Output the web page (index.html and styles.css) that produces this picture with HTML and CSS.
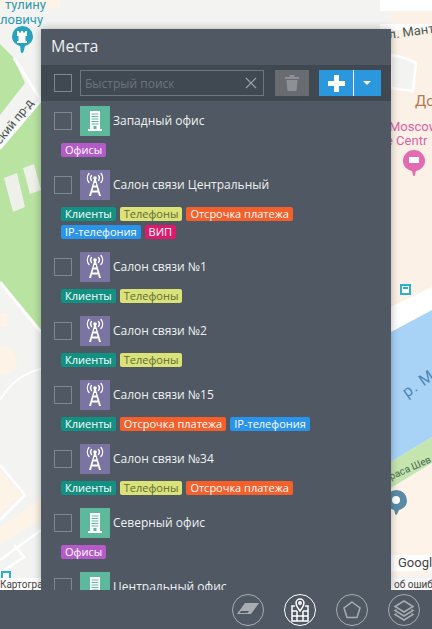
FILE: index.html
```html
<!DOCTYPE html>
<html lang="ru">
<head>
    <meta charset="UTF-8">
    <meta name="viewport" content="width=device-width, initial-scale=1.0">
    <title>Места</title>
    <link rel="stylesheet" href="styles.css">
</head>
<body>
    <svg width="0" height="0" class="defs">
        <symbol id="office" viewBox="0 0 30 30">
            <path fill="#fff" d="M10 5h10v18h-10z"/>
            <path fill="#fff" d="M8 23h14v2h-14z"/>
            <path fill="#5eb89b" d="M11.500 7.500h7v1h-7zM11.500 10h7v1h-7zM11.500 12.500h7v1h-7zM11.500 15h7v1h-7zM11.500 17.500h7v1h-7zM13.500 20h3v3h-3z"/>
        </symbol>
        <symbol id="tower" viewBox="0 0 30 30">
            <g fill="none" stroke="#fff" stroke-width="1.300" stroke-linecap="round">
                <path d="M11.500 5.500a4 4 0 0 0 0 5M9 3.500a7 7 0 0 0 0 9"/>
                <path d="M18.500 5.500a4 4 0 0 1 0 5M21 3.500a7 7 0 0 1 0 9"/>
            </g>
            <circle cx="15" cy="8" r="1.800" fill="#fff"/>
            <path fill="#fff" d="M14.200 9h1.600l5.200 17h-2l-1-3.500h-6l-1 3.500h-2zM13.300 17.500l-.8 3h5l-.8-3zM14.300 13l-.6 2.500h2.600l-.6-2.500z"/>
        </symbol>
    </svg>

    <svg class="map" width="432" height="629" viewBox="0 0 432 629">
        <rect width="432" height="629" fill="#f3f3f2"/>
        <!-- левая часть -->
        <path fill="#fdf3e6" d="M0 0h60v8h-60z"/>
        <path fill="#b9e3a1" d="M0 44l13 13 12 26-25 32z"/>
        <path fill="#b9e3a1" d="M0 150l41 -48v230l-41 -50z"/>
        <path fill="none" stroke="#fff" stroke-width="3" d="M0 148l41 -48M14 58l28 44M0 282l41 50"/>
        <path fill="#eef0ea" d="M4 178l13 -5 8 34-12 5zM23 168l11 -4 7 26-11 4z"/>
        <path fill="#fdf3e6" d="M0 313h7v14h-7zM0 346q16 2 17 15t-17 15z"/>
        <path fill="none" stroke="#fff" stroke-width="2" d="M0 400q15 -25 41 -31"/>
        <path fill="#fdf3e6" d="M0 470l22 25-22 20zM0 545l41 -26v-20l-41 28z"/>
        <path fill="none" stroke="#fff" stroke-width="2.500" d="M0 465l25 30-25 25M0 560l41 -30M14 545l10 12-24 16"/>
        <path fill="#fff" d="M0 578h41v12h-41z"/>
        <!-- правая часть -->
        <path fill="#fbf1e6" d="M391 12h41v280l-41 18z"/>
        <path fill="#fff" d="M380 0h52v11h-52zM380 24h52v6h-52z"/>
        <path fill="#f3f3f2" stroke="#fff" stroke-width="2.500" d="M391 55q14 2 25 8l-3 28-22 -3z"/>
        <path fill="#fff" d="M391 307l41 -20v24l-41 21z"/>
        <path fill="#a8d3f6" d="M391 332l41 -22v127l-41 25z"/>
        <path fill="#c4e5ae" d="M391 488l41 -25v-26l-41 25z"/>
        <path fill="#fdf3e9" d="M391 488l41 -25v112h-41z"/>
        <rect x="391" y="555" width="41" height="16" fill="#fff"/>
        <rect x="391" y="578" width="41" height="12" fill="#f7f7f7"/>
        <!-- значки -->
        <path fill="#27a3bd" d="M22 53c-2 0-1-4 -2-7 -4-1-8-4.500-8-9.500a10.500 10.500 0 0 1 21 0c0 5-4 8.500-8 9.500-1 3-1 7-3 7z"/>
        <path fill="#fff" d="M17 31h2v1.500h2v-1.500h2v1.500h2v-1.500h2v5h-1.500v5h1.500v2h-10v-2h1.500v-5h-1.500z"/>
        <path fill="#e36bb0" d="M414 176c-1.500 0-1-3-2-5-4.500-1-9-4.500-9-10a11 11 0 0 1 22 0c0 5.500-4.500 9-9 10-1 2-.5 5-2 5z"/>
        <rect x="409" y="157" width="10" height="6" fill="#fff"/>
        <rect x="400" y="284" width="11" height="11" fill="#2db0d0"/>
        <path fill="#fff" d="M402 286h7v7h-7z"/>
        <path fill="#2db0d0" d="M403 287h5v2h-5z"/>
        <path fill="#5a8ba6" d="M396 515c-1 0-1-3-2-5-4-1-8-4-8-9.500a10 10 0 0 1 21 0c0 5.500-4 8.500-8 9.500-1 2-2 5-3 5z"/>
        <circle cx="396" cy="500" r="4" fill="#fff"/>
        <rect x="1" y="571" width="10" height="7" fill="#2db0d0"/>
        <rect x="3" y="573" width="6" height="5" fill="#fff"/>
        <!-- подписи -->
        <g font-family="'Roboto', sans-serif">
            <text x="5" y="9" class="map-teal">тулину</text>
            <text x="0" y="24" class="map-teal">ловичу</text>
            <text x="0" y="0" class="map-small" transform="translate(0 145) rotate(-51)">ский пр-д</text>
            <text x="0" y="0" class="map-street" transform="translate(389 39) rotate(-8)">л. Мант</text>
            <text x="415" y="106" class="map-brown">До</text>
            <text x="389" y="131" class="map-pink">Moscow</text>
            <text x="386" y="145" class="map-pink">e Centr</text>
            <text x="0" y="0" class="map-water" transform="translate(407 398) rotate(-35)">р. М</text>
            <text x="0" y="0" class="map-road" transform="translate(391 480) rotate(-24)">раса Шев</text>
            <text x="398" y="567" class="map-attr">Google</text>
            <text x="394" y="588" class="map-tiny">об ошиб</text>
            <text x="0" y="588" class="map-tiny">Картогра</text>
        </g>
    </svg>

    <div class="panel">
        <h2 class="panel-title">Места</h2>
        <div class="toolbar">
            <span class="checkbox"></span>
            <div class="search">
                <span class="search-hint">Быстрый поиск</span>
                <svg class="search-clear" width="12" height="12" viewBox="0 0 12 12">
                    <path d="M1 1l10 10M11 1l-10 10" stroke="#9aa0a6" stroke-width="1.200" fill="none"/>
                </svg>
            </div>
            <button class="trash-btn">
                <svg width="16" height="18" viewBox="0 0 16 18">
                    <path fill="#8e9094" d="M1 3h14v2h-14zM5.500 1h5v2h-5zM2.500 6h11l-1 11h-9z"/>
                </svg>
            </button>
            <button class="add-btn">
                <span class="add-plus">
                    <svg width="17" height="17" viewBox="0 0 17 17">
                        <path fill="#fff" d="M6 0h5v6h6v5h-6v6h-5v-6h-6v-5h6z"/>
                    </svg>
                </span>
                <span class="add-caret"></span>
            </button>
        </div>

        <ul class="place-list">
            <li class="place">
                <div class="place-head">
                    <span class="checkbox"></span>
                    <svg class="place-icon office"><use href="#office"/></svg>
                    <span class="place-name">Западный офис</span>
                </div>
                <div class="tags">
                    <span class="tag tag-office">Офисы</span>
                </div>
            </li>
            <li class="place">
                <div class="place-head">
                    <span class="checkbox"></span>
                    <svg class="place-icon tower"><use href="#tower"/></svg>
                    <span class="place-name">Салон связи Центральный</span>
                </div>
                <div class="tags">
                    <span class="tag tag-clients">Клиенты</span>
                    <span class="tag tag-phones">Телефоны</span>
                    <span class="tag tag-delay">Отсрочка платежа</span>
                    <span class="tag tag-ip">IP-телефония</span>
                    <span class="tag tag-vip">ВИП</span>
                </div>
            </li>
            <li class="place">
                <div class="place-head">
                    <span class="checkbox"></span>
                    <svg class="place-icon tower"><use href="#tower"/></svg>
                    <span class="place-name">Салон связи №1</span>
                </div>
                <div class="tags">
                    <span class="tag tag-clients">Клиенты</span>
                    <span class="tag tag-phones">Телефоны</span>
                </div>
            </li>
            <li class="place">
                <div class="place-head">
                    <span class="checkbox"></span>
                    <svg class="place-icon tower"><use href="#tower"/></svg>
                    <span class="place-name">Салон связи №2</span>
                </div>
                <div class="tags">
                    <span class="tag tag-clients">Клиенты</span>
                    <span class="tag tag-phones">Телефоны</span>
                </div>
            </li>
            <li class="place">
                <div class="place-head">
                    <span class="checkbox"></span>
                    <svg class="place-icon tower"><use href="#tower"/></svg>
                    <span class="place-name">Салон связи №15</span>
                </div>
                <div class="tags">
                    <span class="tag tag-clients">Клиенты</span>
                    <span class="tag tag-delay">Отсрочка платежа</span>
                    <span class="tag tag-ip">IP-телефония</span>
                </div>
            </li>
            <li class="place">
                <div class="place-head">
                    <span class="checkbox"></span>
                    <svg class="place-icon tower"><use href="#tower"/></svg>
                    <span class="place-name">Салон связи №34</span>
                </div>
                <div class="tags">
                    <span class="tag tag-clients">Клиенты</span>
                    <span class="tag tag-phones">Телефоны</span>
                    <span class="tag tag-delay">Отсрочка платежа</span>
                </div>
            </li>
            <li class="place">
                <div class="place-head">
                    <span class="checkbox"></span>
                    <svg class="place-icon office"><use href="#office"/></svg>
                    <span class="place-name">Северный офис</span>
                </div>
                <div class="tags">
                    <span class="tag tag-office">Офисы</span>
                </div>
            </li>
            <li class="place">
                <div class="place-head">
                    <span class="checkbox"></span>
                    <svg class="place-icon office"><use href="#office"/></svg>
                    <span class="place-name">Центральный офис</span>
                </div>
            </li>
        </ul>
    </div>

    <div class="bottom-bar">
        <button class="round-btn">
            <svg width="24" height="20" viewBox="0 0 24 20">
                <path fill="#a9adb2" d="M9 3h14l-8 11h-14z"/>
                <path fill="#4f5863" d="M5 11h8l-1.500 2h-8z"/>
            </svg>
        </button>
        <button class="round-btn active">
            <svg width="24" height="26" viewBox="0 0 24 26">
                <g fill="none" stroke="#fff" stroke-width="1.500">
                    <path d="M12 14c-2-3-4-5-4-8a4 4 0 0 1 8 0c0 3-2 5-4 8z"/>
                    <circle cx="12" cy="6" r="1.200"/>
                    <path d="M7 9h-3v15h16v-15h-3M4 14h5M15 14h5M4 19h16M9 14v10M15 14v10"/>
                </g>
            </svg>
        </button>
        <button class="round-btn">
            <svg width="22" height="22" viewBox="0 0 22 22">
                <path fill="none" stroke="#a9adb2" stroke-width="1.500" d="M11 3l8 6-3 9.500h-10l-3-9.500z"/>
            </svg>
        </button>
        <button class="round-btn">
            <svg width="24" height="24" viewBox="0 0 24 24">
                <g fill="none" stroke="#a9adb2" stroke-width="1.500">
                    <path d="M12 3l9 5.500-9 5.500-9-5.500z"/>
                    <path d="M4.500 11.500l-1.500 1 9 5.500 9-5.500-1.500-1"/>
                    <path d="M4.500 15.500l-1.500 1 9 5.500 9-5.500-1.500-1"/>
                </g>
            </svg>
        </button>
    </div>
</body>
</html>
```

FILE: styles.css
```css
* {
    box-sizing: border-box;
}
html, body {
    height: 100%;
}
body {
    font-family: "Open Sans", "Noto Sans", sans-serif;
    margin: 0;
    position: relative;
    overflow: hidden;
    display: flex;
    flex-direction: column;
    background: #f3f3f2;
}
.defs {
    position: absolute;
}
.map {
    position: absolute;
    left: 0;
    top: 0;
}
.map-teal {
    font-size: 13px;
    fill: #2a9bb5;
}
.map-small {
    font-size: 12px;
    fill: #4d5a55;
}
.map-street {
    font-size: 13px;
    fill: #4d5a55;
}
.map-brown {
    font-size: 15px;
    fill: #b5784f;
}
.map-pink {
    font-size: 13px;
    fill: #d962a8;
}
.map-water {
    font-size: 16px;
    letter-spacing: 1px;
    fill: #4f87b5;
}
.map-road {
    font-size: 10px;
    fill: #4a6a55;
}
.map-attr {
    font-size: 13px;
    fill: #444;
}
.map-tiny {
    font-size: 10px;
    fill: #444;
}
.panel {
    position: relative;
    flex: 1;
    min-height: 0;
    width: 350px;
    margin: 29px 0 0 41px;
    background: #4f5863;
    box-shadow: 0 0 8px rgba(0,0,0,0.3);
    overflow: hidden;
}
.panel-title {
    margin: 0;
    height: 36px;
    padding: 6px 0 0 10px;
    font-size: 16px;
    line-height: 22px;
    font-weight: 400;
    color: #eceef0;
}
.toolbar {
    display: flex;
    align-items: center;
    height: 36px;
    padding: 0 10px 0 13px;
    background: #404851;
}
.checkbox {
    flex: none;
    width: 18px;
    height: 18px;
    border: 1px solid #80868d;
}
.search {
    display: flex;
    align-items: center;
    justify-content: space-between;
    width: 184px;
    height: 26px;
    margin-left: 8px;
    padding: 0 6px 0 4px;
    border: 1px solid #6f767e;
}
.search-hint {
    font-size: 12px;
    color: #6d747c;
}
.trash-btn {
    display: flex;
    align-items: center;
    justify-content: center;
    width: 34px;
    height: 26px;
    margin-left: 11px;
    padding: 0;
    border: none;
    background: #686b70;
}
.add-btn {
    display: flex;
    align-items: center;
    width: 62px;
    height: 26px;
    margin-left: 10px;
    padding: 0;
    border: none;
    background: #2b97dc;
}
.add-plus {
    display: flex;
    align-items: center;
    justify-content: center;
    width: 35px;
    height: 26px;
    border-right: 1px solid #fff;
    background: none;
}
.add-plus svg {
    display: block;
}
.add-caret {
    width: 0;
    height: 0;
    margin-left: 9px;
    border-left: 4px solid transparent;
    border-right: 4px solid transparent;
    border-top: 4px solid #fff;
}
.place-list {
    list-style: none;
    margin: 0;
    padding: 5px 0 0;
}
.place {
    padding: 0 10px 0 13px;
    margin-bottom: 13px;
}
.place-head {
    display: flex;
    align-items: center;
    height: 30px;
}
.place-icon {
    flex: none;
    width: 30px;
    height: 30px;
    margin-left: 8px;
}
.office {
    background: #5eb89b;
}
.tower {
    background: #7a74a3;
}
.place-name {
    margin: -2px 0 0 3px;
    font-size: 12px;
    color: #f0f1f2;
    white-space: nowrap;
}
.tags {
    display: flex;
    flex-wrap: wrap;
    gap: 4px;
    margin: 7px 16px 0 7px;
}
.tag {
    height: 14px;
    padding: 0 4px;
    border-radius: 2px;
    font-size: 11px;
    font-weight: 400;
    line-height: 14px;
    color: #fff;
    white-space: nowrap;
}
.tag-office {
    background: #b35cc8;
}
.tag-clients {
    background: #129183;
}
.tag-phones {
    background: #dbe278;
    color: #5f6a3a;
}
.tag-delay {
    background: #f4602c;
}
.tag-ip {
    background: #2a94ea;
}
.tag-vip {
    background: #df1a6c;
}
.bottom-bar {
    position: relative;
    display: flex;
    justify-content: flex-end;
    align-items: center;
    flex: none;
    gap: 20px;
    height: 39px;
    padding-right: 12px;
    background: #4f5863;
}
.round-btn {
    display: flex;
    align-items: center;
    justify-content: center;
    width: 32px;
    height: 32px;
    padding: 0;
    border: 1px solid #a9adb2;
    border-radius: 50%;
    background: none;
}
.round-btn.active {
    border-color: #fff;
}
```
